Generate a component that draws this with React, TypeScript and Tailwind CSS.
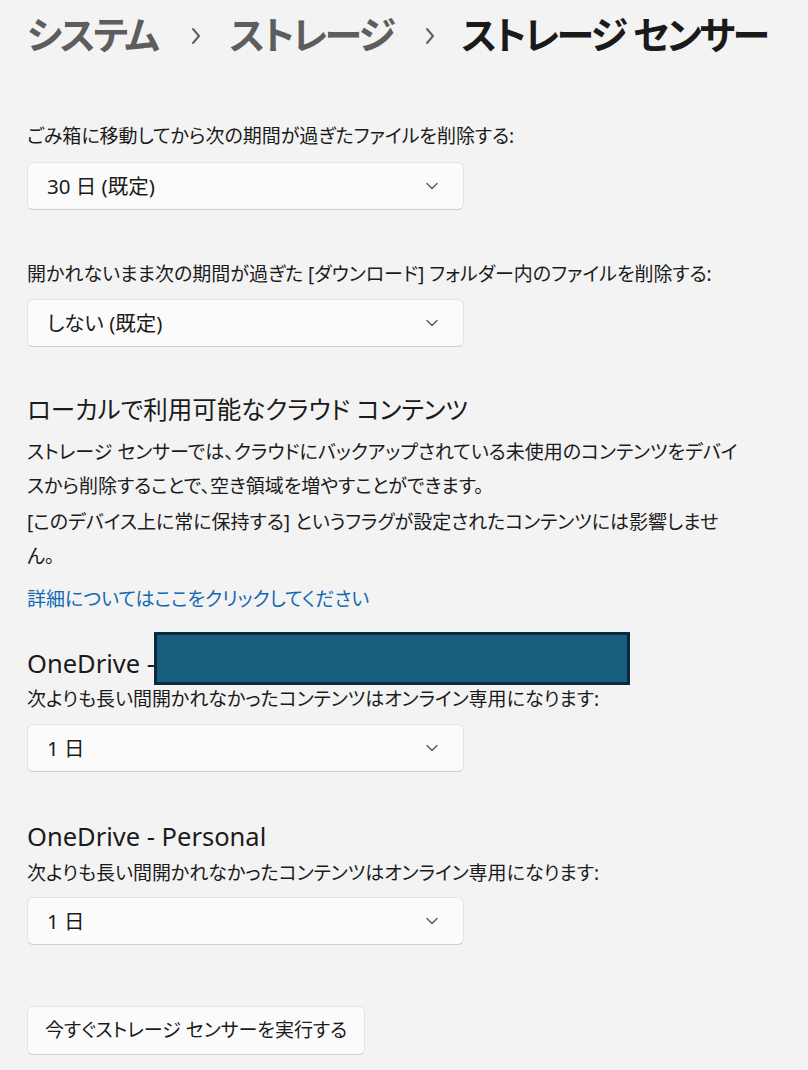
import React from "react";

const FONT =
  "[font-family:'Noto_Sans','Noto_Sans_CJK_JP',sans-serif] [font-feature-settings:'palt']";

function Chevron({ className }: { className?: string }) {
  return (
    <svg width="12" height="8" viewBox="0 0 12 8" className={className} fill="none">
      <path d="M1 1.5 L6 6.5 L11 1.5" stroke="#5a5a5a" strokeWidth="1.4" strokeLinecap="round" strokeLinejoin="round" />
    </svg>
  );
}

function Crumb() {
  return (
    <svg width="10" height="18" viewBox="0 0 10 18" fill="none">
      <path d="M2 2 L8 9 L2 16" stroke="#5f5f5f" strokeWidth="2" strokeLinecap="round" strokeLinejoin="round" />
    </svg>
  );
}

function Select({ value }: { value: string }) {
  return (
    <div className="flex h-[48px] w-[437px] items-center justify-between rounded-[6px] border border-[#e3e3e3] border-b-[#cdcdcd] bg-[#fbfbfb] pl-[19px] pr-[25px]">
      <span className="text-[20.5px] text-[#1b1b1b]">{value}</span>
      <Chevron />
    </div>
  );
}

function Label({ children }: { children: React.ReactNode }) {
  return <div className="whitespace-nowrap text-[19px] leading-[26px] text-[#1b1b1b]">{children}</div>;
}

export default function App() {
  return (
    <div className={`min-h-screen w-[808px] bg-[#f3f3f3] pl-[27px] pt-[9px] pb-[14px] text-[#1b1b1b] ${FONT}`}>
      {/* breadcrumb */}
      <div className="flex items-center whitespace-nowrap text-[38px] font-semibold leading-[50px] tracking-[-2.4px]">
        <span className="shrink-0 text-[#5d5d5d]">システム</span>
        <span className="ml-[34px] mr-[28px] flex shrink-0 items-center pt-[4px]"><Crumb /></span>
        <span className="shrink-0 text-[#5d5d5d]">ストレージ</span>
        <span className="ml-[32px] mr-[26px] flex shrink-0 items-center pt-[4px]"><Crumb /></span>
        <span className="shrink-0 text-[#1a1a1a]">ストレージ センサー</span>
      </div>

      <div className="mt-[64px]">
        <Label>ごみ箱に移動してから次の期間が過ぎたファイルを削除する:</Label>
        <div className="mt-[13px]"><Select value="30 日 (既定)" /></div>
      </div>

      <div className="mt-[51px]">
        <Label>開かれないまま次の期間が過ぎた [ダウンロード] フォルダー内のファイルを削除する:</Label>
        <div className="mt-[12px]"><Select value="しない (既定)" /></div>
      </div>

      <div className="mt-[45px] text-[24.5px] leading-[36px]">ローカルで利用可能なクラウド コンテンツ</div>
      <p className="mt-[7px] w-[712px] text-[19px] leading-[34px]">
        ストレージ センサーでは、クラウドにバックアップされている未使用のコンテンツをデバイスから削除することで、空き領域を増やすことができます。
      </p>
      <p className="mt-[2px] w-[712px] text-[19px] leading-[34px]">
        [このデバイス上に常に保持する] というフラグが設定されたコンテンツには影響しません。
      </p>
      <a className="mt-[11px] block text-[19px] leading-[30px] text-[#1168b3]">詳細についてはここをクリックしてください</a>

      <div className="relative mt-[33px] text-[25.5px] leading-[32px]">
        OneDrive -
        <div className="absolute left-[127px] top-[-15px] h-[53px] w-[476px] border-[3px] border-[#0c2a3b] bg-[#175e7f]" />
      </div>
      <div className="mt-[7px]"><Label>次よりも長い間開かれなかったコンテンツはオンライン専用になります:</Label></div>
      <div className="mt-[12px]"><Select value="1 日" /></div>

      <div className="mt-[48px] text-[25.5px] leading-[32px]">OneDrive - Personal</div>
      <div className="mt-[8px]"><Label>次よりも長い間開かれなかったコンテンツはオンライン専用になります:</Label></div>
      <div className="mt-[11px]"><Select value="1 日" /></div>

      <button className="mt-[61px] flex h-[49px] w-[338px] items-center justify-center rounded-[6px] border border-[#e3e3e3] border-b-[#cdcdcd] bg-[#fbfbfb] text-[19px] text-[#1b1b1b]">
        今すぐストレージ センサーを実行する
      </button>
    </div>
  );
}
